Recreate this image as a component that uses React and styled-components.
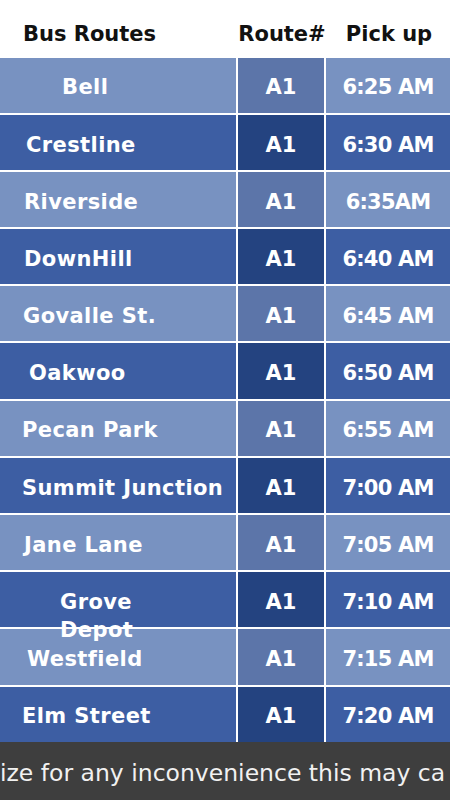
import React from "react";
import styled, { createGlobalStyle } from "styled-components";

const Global = createGlobalStyle`
  html, body { margin: 0; padding: 0; background: #ffffff; }
  body { width: 450px; height: 800px; overflow: hidden; }
`;

const Page = styled.div`
  width: 450px;
  height: 800px;
  display: flex;
  flex-direction: column;
  background: #ffffff;
  font-family: "DejaVu Sans", "Liberation Sans", sans-serif;
  overflow: hidden;
`;

const Columns = `
  display: grid;
  grid-template-columns: 236px 86px 124px;
  column-gap: 2px;
`;

const Header = styled.div`
  ${Columns}
  height: 57.5px;
  flex: none;
`;

const HeadCell = styled.div`
  display: flex;
  align-items: center;
  justify-content: ${(p) => (p.$left ? "flex-start" : "center")};
  padding: 10px 0 0 ${(p) => (p.$left ? "23px" : "0")};
  margin-left: ${(p) => (p.$shift ? `${p.$shift}px` : "0")};
  font-size: 21px;
  font-weight: 700;
  color: #111111;
  white-space: nowrap;
`;

const Table = styled.div`
  display: flex;
  flex-direction: column;
  row-gap: 2px;
  flex: none;
`;

const Row = styled.div`
  ${Columns}
  height: 55.2px;
`;

const Cell = styled.div`
  display: flex;
  align-items: center;
  justify-content: ${(p) => (p.$left ? "flex-start" : "center")};
  padding: 4.5px 0 0 ${(p) => (p.$pad ? `${p.$pad}px` : "0")};
  background: ${(p) => p.$bg};
  color: #ffffff;
  font-size: 21px;
  font-weight: 700;
  letter-spacing: ${(p) => p.$spacing || "0"};
  white-space: nowrap;
  overflow: visible;
`;

const StopName = styled.span`
  display: block;
  height: 28px;
  line-height: 28px;
  letter-spacing: 0.4px;
  white-space: ${(p) => (p.$wrap ? "normal" : "nowrap")};
  width: ${(p) => (p.$wrap ? "72px" : "auto")};
  text-align: center;
  position: relative;
  z-index: 1;
`;

const Footer = styled.div`
  flex: 1;
  background: #3e3e3e;
  color: #f1f1f1;
  display: flex;
  align-items: center;
  padding-top: 4px;
  font-family: "DejaVu Sans", Verdana, sans-serif;
  font-size: 23.5px;
  white-space: nowrap;
  overflow: hidden;
`;

const palette = {
  light: { name: "#7892c1", route: "#5c75a9", time: "#7892c1" },
  dark: { name: "#3d5ea3", route: "#244380", time: "#3d5ea3" },
};

const stops = [
  { name: "Bell", pad: 62, time: "6:25 AM" },
  { name: "Crestline", pad: 26, time: "6:30 AM" },
  { name: "Riverside", pad: 24, time: "6:35AM" },
  { name: "DownHill", pad: 24, time: "6:40 AM" },
  { name: "Govalle St.", pad: 23, time: "6:45 AM" },
  { name: "Oakwoo", pad: 29, time: "6:50 AM" },
  { name: "Pecan Park", pad: 22, time: "6:55 AM" },
  { name: "Summit Junction", pad: 22, time: "7:00 AM" },
  { name: "Jane Lane", pad: 24, time: "7:05 AM" },
  { name: "Grove Depot", pad: 60, time: "7:10 AM", wrap: true },
  { name: "Westfield", pad: 27, time: "7:15 AM" },
  { name: "Elm Street", pad: 22, time: "7:20 AM" },
];

export default function App() {
  return (
    <Page>
      <Global />
      <Header>
        <HeadCell $left>Bus Routes</HeadCell>
        <HeadCell $shift={2}>Route#</HeadCell>
        <HeadCell $shift={2}>Pick up</HeadCell>
      </Header>
      <Table>
        {stops.map((s, i) => {
          const c = i % 2 === 0 ? palette.light : palette.dark;
          return (
            <Row key={s.name}>
              <Cell $left $pad={s.pad} $bg={c.name}>
                <StopName $wrap={s.wrap}>{s.name}</StopName>
              </Cell>
              <Cell $bg={c.route}>A1</Cell>
              <Cell $bg={c.time} $spacing="-0.8px">
                {s.time}
              </Cell>
            </Row>
          );
        })}
      </Table>
      <Footer>ize for any inconvenience this may ca</Footer>
    </Page>
  );
}
